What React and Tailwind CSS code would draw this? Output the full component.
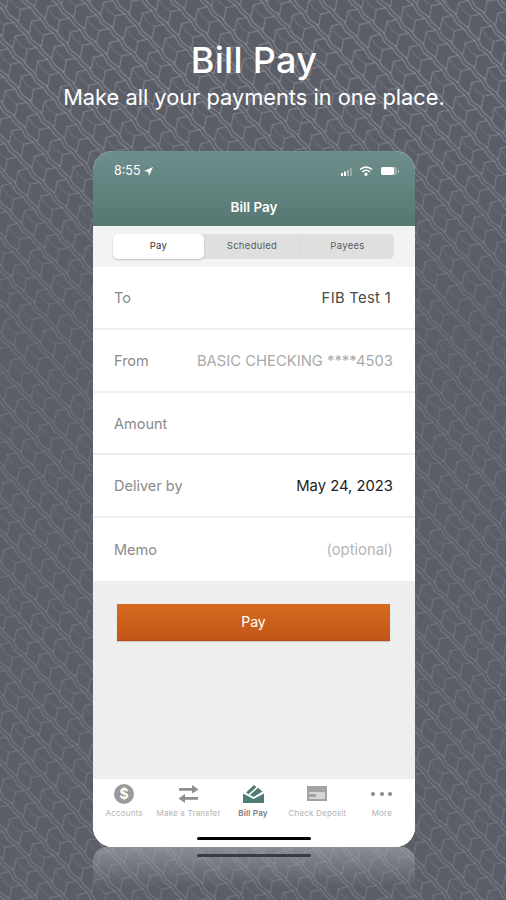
import React from 'react';

const font = { fontFamily: 'Inter, sans-serif' };

const rows = [
  { label: 'To', value: 'FIB Test 1', cls: 'text-[#4a4a4a] pr-[2px] tracking-[0.3px]' },
  { label: 'From', value: 'BASIC CHECKING ****4503', cls: 'text-[#a9a9a9]' },
  { label: 'Amount', value: '', cls: '' },
  { label: 'Deliver by', value: 'May 24, 2023', cls: 'text-[#222222]' },
  { label: 'Memo', value: '(optional)', cls: 'text-[#b5b5b5]' },
];

function Texture() {
  return (
    <svg className="absolute inset-0 w-full h-full" xmlns="http://www.w3.org/2000/svg">
      <defs>
        <pattern id="scales" width="34" height="22" patternUnits="userSpaceOnUse" patternTransform="rotate(48)">
          <g fill="none" stroke="#8f929b" strokeWidth="0.9">
            <path d="M0 2 L8 0.8 L17 3 L26 1 L34 2" />
            <path d="M0 5.5 L8 4.3 L17 6.5 L26 4.5 L34 5.5" />
            <path d="M8 4.3 L3 13 L10 22 M10 0 L8 0.8" />
            <path d="M26 4.5 L21 13 L28 22 M28 0 L26 1" />
            <path d="M3 13 L12 15 L21 13" opacity="0.45" />
          </g>
        </pattern>
      </defs>
      <rect width="100%" height="100%" fill="url(#scales)" />
    </svg>
  );
}

function StatusBar() {
  return (
    <div className="flex items-center justify-between pl-[21px] pr-[16px] h-[40px] text-white">
      <div className="flex items-center gap-[3px] text-[12.5px] leading-none">
        <span>8:55</span>
        <svg width="9" height="9" viewBox="0 0 10 10" fill="#fff"><path d="M10 0 L0 4.5 L4.6 5.4 L5.5 10 Z" /></svg>
      </div>
      <div className="flex items-center">
        <svg width="14" height="9" viewBox="0 0 14 9" fill="#fff">
          <rect x="0" y="6" width="2" height="3" />
          <rect x="3" y="4.5" width="2" height="4.5" />
          <rect x="6" y="3" width="2" height="6" opacity="0.45" />
          <rect x="9" y="1" width="2" height="8" opacity="0.3" />
        </svg>
        <svg className="ml-[4px]" width="14" height="10" viewBox="0 0 14 10" fill="none" stroke="#fff" strokeWidth="1.6">
          <path d="M1 3.5 C4.5 0.3 9.5 0.3 13 3.5" />
          <path d="M3.2 5.8 C5.5 3.9 8.5 3.9 10.8 5.8" />
          <circle cx="7" cy="8.2" r="0.9" fill="#fff" />
        </svg>
        <div className="ml-[8px] w-[16px] h-[8px] rounded-[2px] bg-white/30 flex">
          <div className="w-[13px] h-full rounded-[2px] bg-white" />
        </div>
        <div className="w-px h-[3px] bg-white/50 ml-px" />
      </div>
    </div>
  );
}

function TabItem({ label, active, children }) {
  return (
    <div className="flex-1 flex flex-col items-center">
      <div className="h-[24px] flex items-center justify-center">{children}</div>
      <span className={`mt-[1px] text-[8px] leading-[12px] tracking-[0.2px] whitespace-nowrap ${active ? 'text-[#77797b] font-semibold' : 'text-[#b2b2b2]'}`}>{label}</span>
    </div>
  );
}

function PhoneBody() {
  return (
    <>
      {/* nav header */}
      <div className="h-[75px] bg-gradient-to-b from-[#6f8f8c] to-[#577773] flex flex-col">
        <StatusBar />
        <div className="text-center text-white text-[13.5px] font-semibold leading-[20px] mt-[6px]">Bill Pay</div>
      </div>

      {/* segmented control */}
      <div className="h-[41px] bg-[#f3f3f3] pl-[20px] pr-[21px] pt-[8px]">
        <div className="h-[25px] rounded-[5px] bg-[#dfdfdf] flex text-[9.5px] tracking-[0.3px] text-[#5c5c5c]">
          <div className="w-[91px] rounded-[5px] bg-white shadow-[0_1px_2px_rgba(0,0,0,0.2)] flex items-center justify-center text-[#333333]">Pay</div>
          <div className="w-[97px] flex items-center justify-center border-r border-[#d6d6d6] my-[3px]">Scheduled</div>
          <div className="flex-1 flex items-center justify-center">Payees</div>
        </div>
      </div>

      {/* form */}
      <div className="bg-white">
        {rows.map((row) => (
          <div key={row.label} className="h-[62.8px] flex items-center justify-between pt-[1px] pl-[21px] pr-[22px] border-b-2 border-[#eeeeee] last:border-b-0">
            <span className="text-[#8a8a8a] text-[14.5px]">{row.label}</span>
            <span className={`text-[14.8px] ${row.cls}`}>{row.value}</span>
          </div>
        ))}
      </div>

      {/* pay button */}
      <div className="h-[198px] bg-[#eeeeee] pl-[24px] pr-[25px] pt-[23px]">
        <div className="h-[37px] bg-gradient-to-b from-[#d66a1f] to-[#c25617] border-b border-[#bb4d10] shadow-[0_1px_1px_rgba(0,0,0,0.15)] flex items-center justify-center text-white text-[14px]">Pay</div>
      </div>

      {/* tab bar */}
      <div className="h-[68px] bg-white pt-[3px] relative">
        <div className="flex px-[1px] -ml-[2px]">
          <TabItem label="Accounts">
            <svg width="20" height="20" viewBox="0 0 20 20">
              <circle cx="10" cy="10" r="10" fill="#9a9a9a" />
              <text x="10" y="15" textAnchor="middle" fontSize="14" fontWeight="700" fill="#fff" fontFamily="Inter, sans-serif">$</text>
            </svg>
          </TabItem>
          <TabItem label="Make a Transfer">
            <svg width="21" height="18" viewBox="0 0 21 18" fill="#8f8f8f">
              <path d="M1 3 H14 V0 L20.5 4.5 L14 8.5 V5.8 H1 Z" />
              <path d="M20 12 H7 V9 L0.5 13.5 L7 18 V14.8 H20 Z" />
            </svg>
          </TabItem>
          <TabItem label="Bill Pay" active>
            <svg width="21" height="18" viewBox="0 0 21 18" fill="#4f7d76">
              <path d="M0 8.5 L10.5 14 L21 8.5 V18 H0 Z" />
              <path d="M3 7.5 L11 0 L13.5 2 L5.5 9.2 Z" />
              <path d="M7 10 L15 2.8 L19.5 6.5 L10.5 12 Z" />
            </svg>
          </TabItem>
          <TabItem label="Check Deposit">
            <svg width="20" height="15" viewBox="0 0 20 15">
              <rect width="20" height="15" fill="#a3a3a3" />
              <rect x="2" y="6" width="16" height="7" fill="#d6d6d6" />
              <rect x="2" y="8" width="7" height="3" fill="#a3a3a3" />
            </svg>
          </TabItem>
          <TabItem label="More">
            <div className="flex gap-[4.5px]">
              <div className="w-[4px] h-[4px] rounded-full bg-[#8a8a8a]" />
              <div className="w-[4px] h-[4px] rounded-full bg-[#8a8a8a]" />
              <div className="w-[4px] h-[4px] rounded-full bg-[#8a8a8a]" />
            </div>
          </TabItem>
        </div>
        <div className="absolute left-[104px] bottom-[7px] w-[114px] h-[3px] rounded-full bg-black" />
      </div>
    </>
  );
}

export default function App() {
  return (
    <div className="relative w-[506px] h-[900px] overflow-hidden bg-[#5b5e67]" style={font}>
      <Texture />
      {/* the texture is crisper at the top of the page than further down */}
      <div className="absolute inset-0 bg-gradient-to-b from-transparent from-10% via-[#5b5e67]/50 via-35% to-[#5b5e67]/30" />

      <div className="relative flex flex-col items-center pl-[2px]">
        <h1 className="mt-[38px] text-white text-[36px] leading-[44px] font-medium tracking-[0.3px]">Bill Pay</h1>
        <p className="text-white text-[21.8px] leading-[30px]">Make all your payments in one place.</p>

        <div className="mt-[39px] w-[322px] h-[696px] rounded-[20px] overflow-hidden bg-white flex flex-col shrink-0">
          <PhoneBody />
        </div>
      </div>

      {/* reflection under the phone */}
      <div className="absolute left-[93px] top-[847px] w-[322px] h-[53px] rounded-t-[14px] bg-gradient-to-b from-[#b0b2b6]/55 to-transparent to-75%">
        <div className="mx-auto mt-[7px] w-[114px] h-[3px] rounded-full bg-[#3a3b40]" />
      </div>
    </div>
  );
}
